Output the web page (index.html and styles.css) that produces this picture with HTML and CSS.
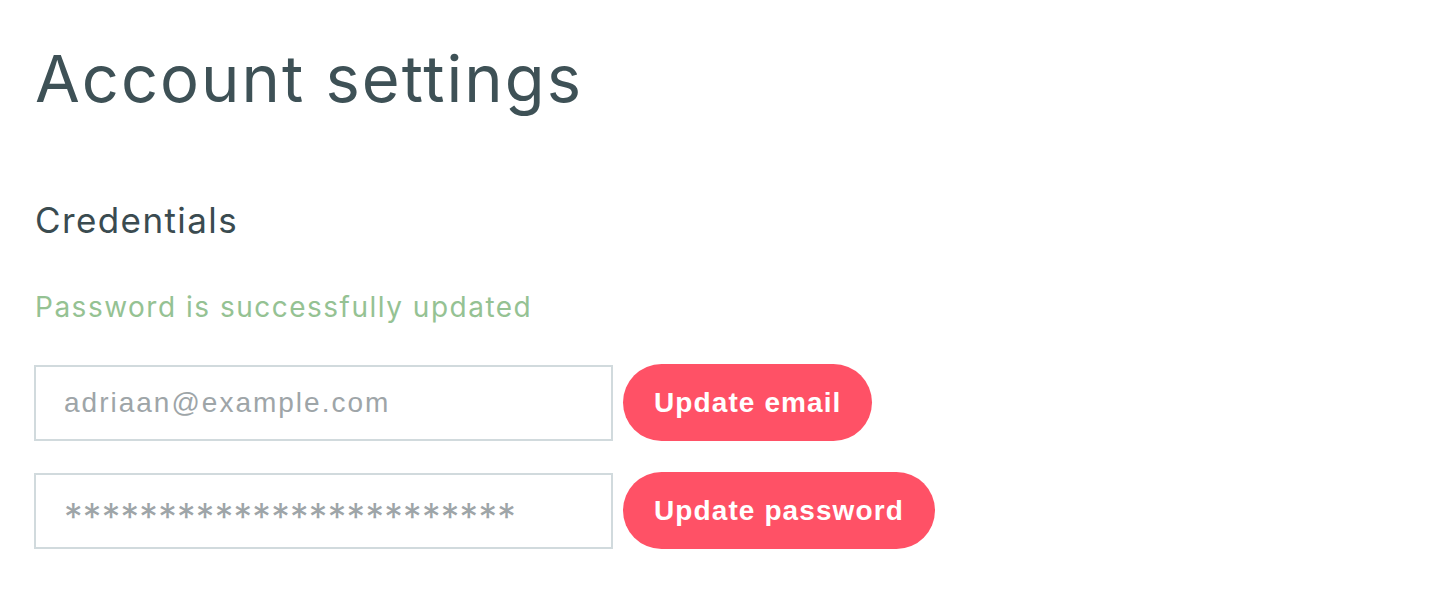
FILE: index.html
```html
<!DOCTYPE html>
<html lang="en">
<head>
<meta charset="utf-8">
<title>Account settings</title>
<link rel="stylesheet" href="styles.css">
</head>
<body>
<main class="page">
  <h1 class="title">Account settings</h1>
  <section class="credentials">
    <h2 class="section-title">Credentials</h2>
    <p class="success">Password is successfully updated</p>
    <form class="row">
      <input class="field" type="email" placeholder="adriaan@example.com">
      <button class="btn" type="button">Update email</button>
    </form>
    <form class="row">
      <input class="field field-pass" type="password" placeholder="************************">
      <button class="btn" type="button">Update password</button>
    </form>
  </section>
</main>
</body>
</html>
```
FILE: styles.css
```css
html, body {
  margin: 0;
  padding: 0;
  background: #ffffff;
}

.page {
  padding: 46px 34px 0;
  font-family: Inter, "Liberation Sans", sans-serif;
  color: #3e5156;
}

.title {
  margin: 0;
  font-size: 65px;
  line-height: 65px;
  font-weight: 400;
  letter-spacing: 2px;
  color: #3e5156;
  padding-left: 1px;
}

.section-title {
  margin: 92px 0 0;
  font-size: 35px;
  line-height: 35px;
  font-weight: 400;
  letter-spacing: 1.4px;
  color: #3a4b50;
  padding-left: 1px;
}

.success {
  margin: 55px 0 0;
  font-size: 28px;
  line-height: 28px;
  color: #95c293;
  letter-spacing: 1.5px;
  padding-left: 1px;
}

.row {
  display: flex;
  gap: 10px;
  margin-top: 44px;
}

.row + .row {
  margin-top: 32px;
}

.field {
  box-sizing: border-box;
  width: 579px;
  height: 76px;
  border: 2px solid #d1dadd;
  border-radius: 0;
  padding: 0 0 0 28px;
  font-family: "Liberation Sans", Arial, sans-serif;
  font-size: 28px;
  letter-spacing: 2px;
  color: #3e5156;
  outline: none;
  background: #fff;
}

.field::placeholder {
  color: #9ea5a8;
  opacity: 1;
}

.field-pass {
  font-family: Inter, sans-serif;
  font-size: 37px;
  letter-spacing: 0.3px;
  padding-top: 11px;
}

.btn {
  height: 77px;
  margin-top: -1px;
  padding: 0 31px;
  border: none;
  border-radius: 39px;
  background: #ff5166;
  color: #ffffff;
  font-family: "Liberation Sans", Arial, sans-serif;
  font-weight: 700;
  font-size: 28px;
  letter-spacing: 1.1px;
  cursor: pointer;
}
```
